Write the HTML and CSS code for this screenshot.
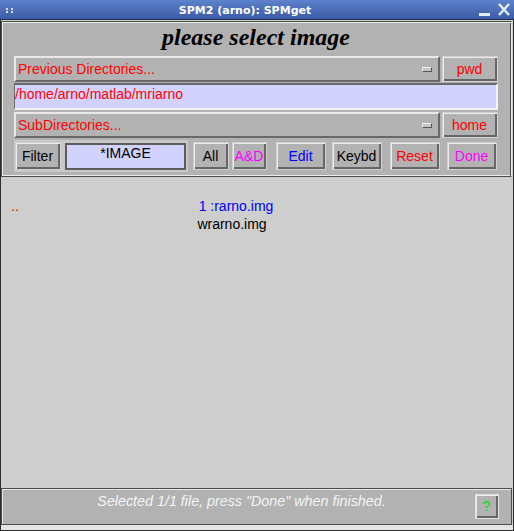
FILE: index.html
```html
<!DOCTYPE html>
<html>
<head>
<meta charset="utf-8">
<title>SPM2 (arno): SPMget</title>
<link rel="stylesheet" href="styles.css">
</head>
<body>
<div class="window">
  <header class="titlebar">
    <div class="tb-left">
      <svg width="20" height="19" viewBox="0 0 20 19"><g fill="#d6def0"><rect x="6" y="8" width="2" height="2"/><rect x="11" y="8" width="2" height="2"/><rect x="6" y="11" width="2" height="2"/><rect x="11" y="11" width="2" height="2"/></g></svg>
    </div>
    <div class="tb-title">SPM2 (arno): SPMget</div>
    <div class="tb-right">
      <svg width="44" height="19" viewBox="0 0 44 19"><rect x="9" y="13" width="11" height="3" fill="#e4eaf6"/><path d="M29 4 L39 15 M39 4 L29 15" stroke="#e4eaf6" stroke-width="2.4" fill="none"/></svg>
    </div>
  </header>
  <div class="frame">
    <section class="panel panel-top">
      <h1 class="heading">please select image</h1>
      <div class="row row-popup">
        <div class="popup red"><span>Previous Directories...</span><span class="indicator"></span></div>
        <button type="button" class="btn btn-side red">pwd</button>
      </div>
      <div class="edit edit-path red">/home/arno/matlab/mriarno</div>
      <div class="row row-popup row-sub">
        <div class="popup red"><span>SubDirectories...</span><span class="indicator"></span></div>
        <button type="button" class="btn btn-side red">home</button>
      </div>
      <div class="row row-buttons">
        <div class="filter-group">
          <button type="button" class="btn btn-filter">Filter</button>
          <div class="edit edit-filter">*IMAGE</div>
        </div>
        <button type="button" class="btn btn-all">All</button>
        <button type="button" class="btn btn-ad magenta">A&amp;D</button>
        <button type="button" class="btn btn-std btn-edit blue">Edit</button>
        <button type="button" class="btn btn-std btn-keybd">Keybd</button>
        <button type="button" class="btn btn-std btn-reset red">Reset</button>
        <button type="button" class="btn btn-std btn-done magenta">Done</button>
      </div>
    </section>
    <section class="list">
      <div class="list-row"><span class="dir red">..</span><span class="file blue">1 :rarno.img</span></div>
      <div class="list-row"><span class="dir"></span><span class="file file-second">wrarno.img</span></div>
    </section>
    <footer class="panel status">
      <div class="status-text">Selected 1/1 file, press "Done" when finished.</div>
      <button type="button" class="btn btn-help">?</button>
    </footer>
    <div class="strip"></div>
  </div>
</div>
</body>
</html>
```

FILE: styles.css
```css
* { box-sizing: border-box; }
html, body { margin: 0; padding: 0; }
body {
  width: 514px;
  height: 531px;
  overflow: hidden;
  background: #cecece;
  font-family: "Liberation Sans", Arial, sans-serif;
  font-size: 14px;
  color: #000;
}
.window { display: flex; flex-direction: column; height: 531px; }

.titlebar {
  display: flex;
  height: 20px;
  flex: none;
  background: linear-gradient(#5e82cc, #3b5aa5);
  border-bottom: 1px solid #24304c;
  color: #fff;
}
.tb-left { width: 20px; flex: none; }
.tb-left svg, .tb-right svg { display: block; }
.tb-title {
  flex: 1;
  text-align: center;
  font-family: "DejaVu Sans", sans-serif;
  font-weight: bold;
  font-size: 11px;
  line-height: 17px;
  padding-top: 2px;
}
.tb-right { width: 44px; flex: none; }

.frame {
  flex: 1;
  display: flex;
  flex-direction: column;
  border: 1px solid #2e2e2e;
  border-top: 0;
  padding-top: 1px;
}

.panel {
  background: #b2b2b2;
  border: 1px solid #4c4c4c;
  margin-right: 1px;
  flex: none;
}
.panel-top {
  height: 156px;
  padding: 0 13px 0 12px;
  border-right-color: #ececec;
  box-shadow: inset 1px 1px 0 #ececec, inset -1px 0 0 #4c4c4c, inset 0 -1px 0 #ececec;
}
.heading {
  margin: 0;
  padding-top: 1px;
  height: 34px;
  font-family: "Liberation Serif", "Times New Roman", serif;
  font-weight: bold;
  font-style: italic;
  font-size: 24px;
  line-height: 28px;
  text-align: center;
}

.red { color: #ff0000; }
.magenta { color: #ff00ff; }
.blue { color: #0000ff; }

.row { display: flex; }
.row-popup { height: 26px; }
.row-sub { margin-top: 2px; }

.popup {
  width: 426px;
  height: 26px;
  display: flex;
  align-items: center;
  justify-content: space-between;
  padding: 0 6px 0 2px;
  border: 2px solid;
  border-color: #e8e8e8 #686868 #686868 #e8e8e8;
  line-height: 16px;
}
.indicator {
  width: 10px;
  height: 5px;
  border: 1px solid;
  border-color: #eeeeee #555555 #555555 #eeeeee;
  background: #c6c6c6;
}

.btn {
  font-family: inherit;
  font-size: 14px;
  line-height: 16px;
  margin: 0;
  padding: 0 2px 1px 1px;
  background: #b2b2b2;
  border: 1px solid #d0d0d0;
  box-shadow: inset 1px 1px 0 #ececec, inset -2px -2px 0 #666666;
  text-align: center;
  flex: none;
}
.btn-side { width: 56px; height: 26px; margin-left: 2px; }

.edit {
  background: #d2d2ff;
  line-height: 16px;
  border-style: solid;
}
.edit-path {
  margin-top: 1px;
  height: 27px;
  border-width: 2px 2px 2px 1px;
  border-color: #6a6a6a #f4f4f4 #f4f4f4 #6a6a6a;
  padding-top: 1px;
}

.row-buttons {
  margin-top: 2px;
  height: 32px;
  align-items: center;
}
.filter-group {
  width: 174px;
  height: 32px;
  display: flex;
  align-items: flex-start;
  gap: 4px;
  padding: 2px 2px 2px 1px;
  background: #c8c8c8;
  flex: none;
}
.btn-filter { width: 46px; height: 28px; }
.edit-filter {
  width: 121px;
  height: 27px;
  margin-top: 1px;
  border-width: 2px;
  border-color: #5c5c5c;
  text-align: center;
}
.btn-all { width: 36px; height: 28px; margin-left: 5px; }
.btn-ad { width: 35px; height: 28px; margin-left: 3px; }
.btn-std { width: 50px; height: 28px; }
.btn-edit { margin-left: 9px; }
.btn-keybd { margin-left: 6px; }
.btn-reset { margin-left: 8px; }
.btn-done { margin-left: 7px; }

.list {
  flex: 1;
  padding: 20px 0 0 10px;
}
.list-row { display: flex; height: 18px; line-height: 18px; }
.dir { width: 150px; flex: none; }
.file { width: 150px; flex: none; text-align: center; }
.file-second { padding-right: 8px; }

.status {
  height: 37px;
  display: flex;
  align-items: flex-start;
  padding-right: 12px;
  box-shadow: inset 1px 1px 0 #e8e8e8;
}
.status-text {
  flex: 1;
  padding: 4px 0 0 6px;
  line-height: 16px;
  font-size: 14.3px;
  text-align: center;
  font-style: italic;
  color: #f4f4f4;
}
.btn-help {
  width: 24px;
  height: 25px;
  margin-top: 5px;
  color: #00e000;
  border-color: #e0e0e0;
}

.strip { height: 5px; flex: none; background: #e4e4e4; }
```
